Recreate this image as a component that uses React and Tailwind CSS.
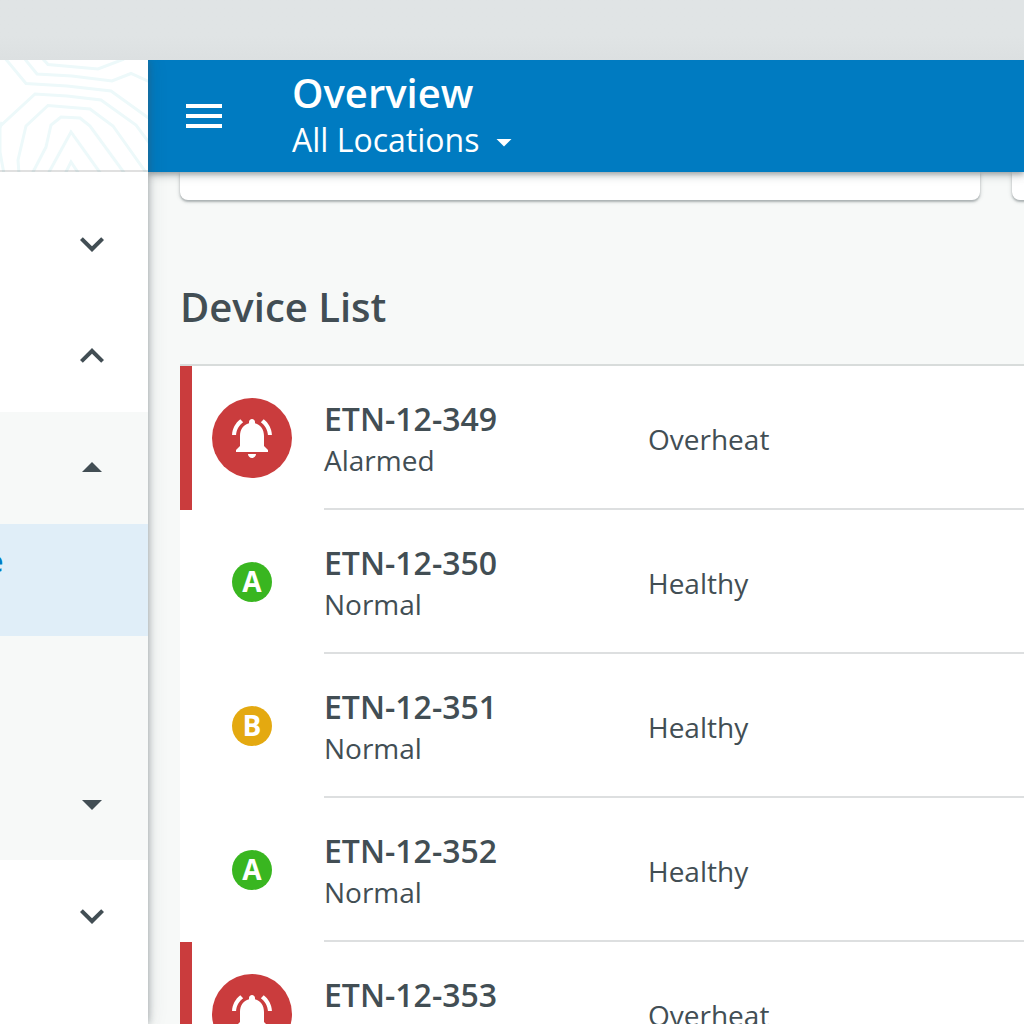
const devices = [
  { name: "ETN-12-349", status: "Alarmed", health: "Overheat", kind: "alarm" },
  { name: "ETN-12-350", status: "Normal", health: "Healthy", kind: "A" },
  { name: "ETN-12-351", status: "Normal", health: "Healthy", kind: "B" },
  { name: "ETN-12-352", status: "Normal", health: "Healthy", kind: "A" },
  { name: "ETN-12-353", status: "Alarmed", health: "Overheat", kind: "alarm" },
];

const icons = {
  down: "M16.59 8.59L12 13.17 7.41 8.59 6 10l6 6 6-6z",
  up: "M12 8l-6 6 1.41 1.41L12 10.83l4.59 4.58L18 14z",
  caretDown: "M7 10l5 5 5-5z",
  caretUp: "M7 14l5-5 5 5z",
  menu: "M3 18h18v-2H3v2zm0-5h18v-2H3v2zm0-7v2h18V6H3z",
  bell: "M7.58 4.08L6.15 2.65C3.75 4.48 2.17 7.3 2.03 10.5h2c.15-2.65 1.51-4.97 3.55-6.42zm12.39 6.42h2c-.15-3.2-1.73-6.02-4.12-7.85l-1.42 1.43c2.02 1.45 3.39 3.77 3.54 6.42zM18 11c0-3.07-1.64-5.64-4.5-6.32V4c0-.83-.67-1.5-1.5-1.5s-1.5.67-1.5 1.5v.68C7.63 5.36 6 7.92 6 11v5l-2 2v1h16v-1l-2-2v-5zm-6 11c.14 0 .27-.01.4-.04.65-.14 1.18-.58 1.44-1.18.1-.24.15-.5.15-.78h-4c.01 1.1.9 2 2.01 2z",
};

function Icon({ name, className = "size-12" }) {
  return (
    <svg viewBox="0 0 24 24" fill="currentColor" className={className}>
      <path d={icons[name]} />
    </svg>
  );
}

function NavRow({ icon, className = "", children }) {
  return (
    <div className={`flex h-28 shrink-0 items-center justify-end pr-8 ${className}`}>
      {children}
      {icon && <Icon name={icon} />}
    </div>
  );
}

function Contours() {
  return (
    <svg viewBox="0 0 148 112" fill="none" stroke="#edf9fa" strokeWidth="3" className="h-28 w-[148px]">
      <path d="M43-1L48 4.500 98 9 124-1" />
      <path d="M24-2L37 14 72 16 112 21 131 13.500 150 22" />
      <path d="M4-3L26 23.500 67 26 111 31 150 59" />
      <path d="M-3 69L35 34 67 36 101 40 136 65 150 84" />
      <path d="M2 62L0 68V92L4 114" />
      <path d="M19 114L18 100 26 66 48 45.500 90 49 113 66 147 114" />
      <path d="M32 114L46 87 51 65 61 57 80 58 90 66 125 114" />
      <path d="M48 114L71 72 101 114" />
      <path d="M65 114L71 102 79 114" />
    </svg>
  );
}

function Sidebar() {
  return (
    <aside className="relative z-20 flex w-[148px] shrink-0 flex-col bg-white text-[#424e54] shadow-[0_0_8px_rgba(66,78,84,0.5),0_0_20px_rgba(66,78,84,0.12)]">
      <div className="relative h-28 shrink-0 overflow-hidden after:absolute after:inset-x-0 after:bottom-0 after:h-0.5 after:bg-black/12">
        <Contours />
      </div>
      <NavRow icon="down" className="mt-4" />
      <NavRow icon="up" />
      <NavRow icon="caretUp" className="bg-[#f7f9f8]" />
      <NavRow className="relative bg-[#e0eef8]">
        <span className="absolute right-[144.500px] top-[17px] text-[28px] font-semibold leading-10 text-[#007bc1]">e</span>
      </NavRow>
      <NavRow className="bg-[#f7f9f8]" />
      <NavRow icon="caretDown" className="bg-[#f7f9f8]" />
      <NavRow icon="down" />
    </aside>
  );
}

function Header() {
  return (
    <header className="relative z-10 flex h-28 shrink-0 items-center bg-[#007bc1] pl-8 text-white shadow-[0_2px_6px_rgba(66,78,84,0.5),0_4px_10px_rgba(66,78,84,0.14)]">
      <Icon name="menu" />
      <div className="ml-16 flex flex-col pt-0.5">
        <h1 className="text-[40px] font-semibold leading-[48px]">Overview</h1>
        <div className="-mt-px mb-px flex h-12 items-center text-[32px] leading-[48px]">
          All Locations
          <Icon name="caretDown" className="mt-1 ml-[7px] size-9" />
        </div>
      </div>
    </header>
  );
}

function Badge({ kind }) {
  if (kind === "alarm")
    return (
      <span className="flex size-20 items-center justify-center rounded-full bg-[#ca3c3d] text-white">
        <Icon name="bell" />
      </span>
    );
  return (
    <span
      className={`flex size-10 items-center justify-center rounded-full pb-0.5 text-[28px] font-bold leading-10 text-white ${
        kind === "A" ? "bg-[#39b620]" : "bg-[#e4a910]"
      }`}
    >
      {kind}
    </span>
  );
}

function DeviceRow({ name, status, health, kind }) {
  return (
    <li className="flex h-36">
      <div className={`w-3 shrink-0 ${kind === "alarm" ? "bg-[#ca3c3d]" : ""}`} />
      <div className="flex w-[120px] shrink-0 items-center justify-center">
        <Badge kind={kind} />
      </div>
      <div className="ml-3 flex flex-1 border-b-2 border-[#dddfe0]">
        <div className="w-[324px] shrink-0 pt-[31px]">
          <div className="text-[32px] font-semibold leading-[44px]">{name}</div>
          <div className="text-[28px] leading-[38px]">{status}</div>
        </div>
        <div className="pt-[53px] text-[28px] leading-10">{health}</div>
      </div>
    </li>
  );
}

const cardShadow = "shadow-[0_2px_2px_rgba(66,78,84,0.3),0_1px_4px_rgba(66,78,84,0.25)]";

export default function App() {
  return (
    <div className="flex h-screen w-screen flex-col overflow-hidden bg-[#f7f9f8] font-['Open_Sans',sans-serif] text-[#424e54]">
      <div className="h-[60px] shrink-0 bg-linear-to-b from-[#e0e4e5] from-60% to-[#dce0e1]" />
      <div className="flex min-h-0 flex-1 overflow-hidden">
        <Sidebar />
        <main className="flex min-w-0 flex-1 flex-col">
          <Header />
          <div className="flex h-7 shrink-0 gap-8 pl-8">
            <div className={`w-[800px] shrink-0 rounded-b-lg bg-white ${cardShadow}`} />
            <div className={`w-[800px] shrink-0 rounded-b-lg bg-white ${cardShadow}`} />
          </div>
          <h2 className="mt-[79px] ml-8 text-[40px] font-semibold leading-[56px]">Device List</h2>
          <ul className="mt-[29px] ml-8 border-t-2 border-[#d8dcdb] bg-white">
            {devices.map((device) => (
              <DeviceRow key={device.name} {...device} />
            ))}
          </ul>
        </main>
      </div>
    </div>
  );
}
